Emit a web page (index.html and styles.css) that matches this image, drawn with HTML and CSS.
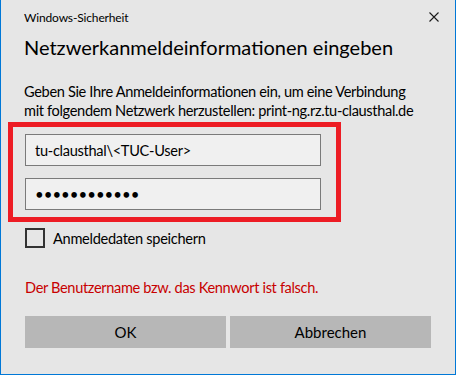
FILE: index.html
```html
<!DOCTYPE html>
<html lang="de">
<head>
    <meta charset="UTF-8" />
    <title>Windows-Sicherheit</title>
    <link rel="stylesheet" href="styles.css">
</head>
<body>

<div class="dialog">
    <div class="title-bar">
        <span class="title">Windows-Sicherheit</span>
        <svg class="close" width="10" height="10" viewBox="0 0 10 10">
            <path d="M0.5 0.5 L9.5 9.5 M9.5 0.5 L0.5 9.5" stroke="#1a1a1a" stroke-width="1.1" fill="none" />
        </svg>
    </div>

    <div class="content">
        <h1>Netzwerkanmeldeinformationen eingeben</h1>
        <p class="info">Geben Sie Ihre Anmeldeinformationen ein, um eine Verbindung<br>mit folgendem Netzwerk herzustellen: print-ng.rz.tu-clausthal.de</p>

        <div class="highlight">
            <input class="field" type="text" value="tu-clausthal\<TUC-User>">
            <input class="field password" type="password" value="geheimpasswo">
        </div>

        <label class="remember">
            <input type="checkbox" class="check">
            <span>Anmeldedaten speichern</span>
        </label>

        <p class="error">Der Benutzername bzw. das Kennwort ist falsch.</p>

        <div class="buttons">
            <button class="btn">OK</button>
            <button class="btn">Abbrechen</button>
        </div>
    </div>
</div>

</body>
</html>
```

FILE: styles.css
```css
body {
    margin: 0;
    font-family: Lato, "Open Sans", sans-serif;
    color: #000;
}

.dialog {
    width: 456px;
    height: 375px;
    box-sizing: border-box;
    background-color: #e6e6e6;
    border: 1px solid #0078d7;
    border-top: none;
}

.title-bar {
    height: 34px;
    display: flex;
    align-items: center;
    justify-content: space-between;
    padding: 0 16px 0 23px;
}

.title {
    font-size: 12px;
    letter-spacing: -0.15px;
    color: #000;
}

.close {
    display: block;
}

.content {
    padding: 0 23px 0 24px;
}

h1 {
    margin: 0 0 0 -1px;
    font-size: 20px;
    font-weight: normal;
    line-height: 27px;
    color: #000;
}

.info {
    margin: 21px 0 0 -1px;
    font-size: 14.6px;
    letter-spacing: -0.35px;
    line-height: 19px;
    white-space: nowrap;
}

.highlight {
    margin: 2px 0 0 -17px;
    width: 333px;
    box-sizing: border-box;
    border: 5px solid #ed1c24;
    padding: 7px 14px 7px 12px;
    display: flex;
    flex-direction: column;
    gap: 12px;
}

.field {
    width: 296px;
    height: 32px;
    box-sizing: border-box;
    margin: 0;
    border: 1px solid #7a7a7a;
    background-color: #f0f0f0;
    padding: 0 9px;
    font-family: Lato, "Open Sans", sans-serif;
    font-size: 14.6px;
    letter-spacing: -0.3px;
    color: #000;
    outline: none;
}

.password {
    font-size: 15px;
    letter-spacing: 0;
}

.remember {
    display: flex;
    align-items: center;
    margin-top: 6px;
    font-size: 14.6px;
    letter-spacing: -0.3px;
}

.check {
    appearance: none;
    width: 20px;
    height: 20px;
    margin: 0 8px 0 0;
    box-sizing: border-box;
    border: 2px solid #333;
    background: transparent;
}

.error {
    margin: 30px 0 0 0;
    font-size: 14.6px;
    letter-spacing: -0.35px;
    line-height: 20px;
    color: #c80000;
}

.buttons {
    display: flex;
    gap: 4px;
    margin-top: 18px;
}

.btn {
    width: 201px;
    height: 32px;
    border: none;
    background-color: #b7b7b7;
    font-family: Lato, "Open Sans", sans-serif;
    font-size: 15px;
    color: #000;
}
```
